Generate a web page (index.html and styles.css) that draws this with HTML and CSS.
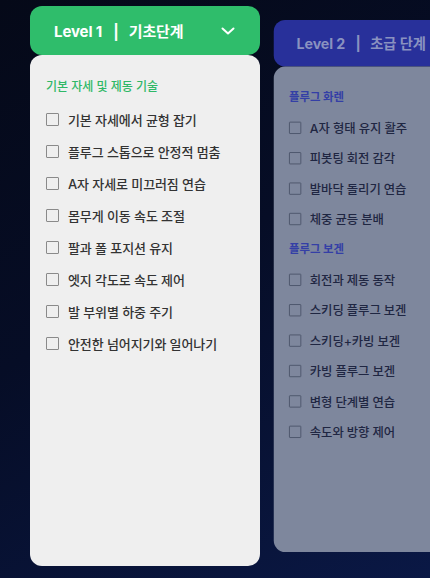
FILE: index.html
```html
<!DOCTYPE html>
<html lang="ko">
<head>
<meta charset="utf-8">
<title>Levels</title>
<link rel="stylesheet" href="styles.css">
</head>
<body>
<div class="carousel">
  <section class="card card--green">
    <div class="card-header">
      <span class="card-title">Level 1<span class="divider">|</span>기초단계</span>
      <svg class="chevron" width="14" height="8" viewBox="0 0 14 8"><polyline points="1.5,1.5 7,6.5 12.5,1.5" fill="none" stroke="#fff" stroke-width="2" stroke-linecap="round" stroke-linejoin="round"/></svg>
    </div>
    <div class="card-body">
      <h3 class="section-title">기본 자세 및 제동 기술</h3>
      <ul class="list">
        <li><span class="box"></span>기본 자세에서 균형 잡기</li>
        <li><span class="box"></span>플루그 스톱으로 안정적 멈춤</li>
        <li><span class="box"></span>A자 자세로 미끄러짐 연습</li>
        <li><span class="box"></span>몸무게 이동 속도 조절</li>
        <li><span class="box"></span>팔과 폴 포지션 유지</li>
        <li><span class="box"></span>엣지 각도로 속도 제어</li>
        <li><span class="box"></span>발 부위별 하중 주기</li>
        <li><span class="box"></span>안전한 넘어지기와 일어나기</li>
      </ul>
    </div>
  </section>
  <section class="card card--blue card--inactive">
    <div class="card-header">
      <span class="card-title">Level 2<span class="divider">|</span>초급 단계</span>
    </div>
    <div class="card-body">
      <h3 class="section-title">플루그 화렌</h3>
      <ul class="list">
        <li><span class="box"></span>A자 형태 유지 활주</li>
        <li><span class="box"></span>피봇팅 회전 감각</li>
        <li><span class="box"></span>발바닥 돌리기 연습</li>
        <li><span class="box"></span>체중 균등 분배</li>
      </ul>
      <h3 class="section-title">플루그 보겐</h3>
      <ul class="list">
        <li><span class="box"></span>회전과 제동 동작</li>
        <li><span class="box"></span>스키딩 플루그 보겐</li>
        <li><span class="box"></span>스키딩+카빙 보겐</li>
        <li><span class="box"></span>카빙 플루그 보겐</li>
        <li><span class="box"></span>변형 단계별 연습</li>
        <li><span class="box"></span>속도와 방향 제어</li>
      </ul>
    </div>
  </section>
</div>
</body>
</html>
```
FILE: styles.css
```css
* { box-sizing: border-box; }
html, body {
  margin: 0;
  padding: 0;
  width: 430px;
  height: 578px;
  overflow: hidden;
}
body {
  background: linear-gradient(150deg, #050918 0%, #060d26 45%, #0a1845 100%);
  font-family: Inter, "Noto Sans CJK KR", sans-serif;
}
.carousel {
  display: flex;
  gap: 8px;
  padding: 6px 0 0 30px;
  width: 430px;
  overflow: hidden;
}
.card {
  flex: 0 0 230px;
  width: 230px;
  height: 560px;
  display: flex;
  flex-direction: column;
}
.card-header {
  height: 49px;
  flex: 0 0 49px;
  border-radius: 12px;
  display: flex;
  align-items: center;
  justify-content: space-between;
  padding: 0 25px 0 24px;
}
.card-title {
  font-size: 15px;
  font-weight: 700;
  color: #fff;
  letter-spacing: -0.1px;
}
.divider {
  margin: 0 10px 0 11px;
}
.card--green .card-header { background: #2fbd6b; }
.card-body {
  flex: 1;
  background: #efefef;
  border-radius: 12px;
  padding: 24px 16px 0 16px;
}
.section-title {
  margin: 0;
  font-size: 12px;
  font-weight: 500;
  line-height: 16px;
  letter-spacing: 0;
  color: #2fb867;
}
.list {
  list-style: none;
  margin: 0;
  padding: 8px 0 0 0;
}
.list li {
  display: flex;
  align-items: center;
  height: 32px;
  font-size: 13px;
  font-weight: 500;
  color: #333;
  letter-spacing: -0.1px;
}
.box {
  width: 13px;
  height: 13px;
  border: 1px solid #8a8a8a;
  border-radius: 1px;
  margin-right: 9px;
  flex: 0 0 13px;
}
.list + .section-title { margin-top: 8px; }

.card--inactive {
  transform: scale(0.95);
  transform-origin: center center;
}
.card--blue .card-header { background: #28309a; }
.card--blue .card-title { color: #8a92c0; }
.card--blue .card-body { background: #7e879d; }
.card--blue .section-title { color: #343fa6; font-weight: 700; }
.card--blue .list li { color: #1f2642; }
.card--blue .box { border-color: #4d566c; }
```
